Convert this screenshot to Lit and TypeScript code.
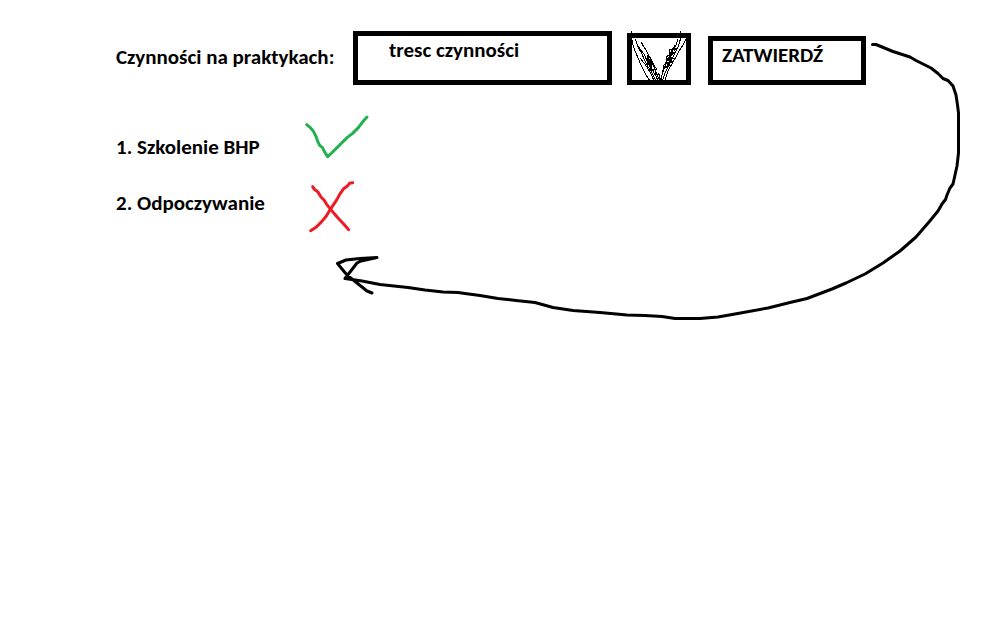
import { LitElement, html, css, svg } from "lit";
import { customElement, state } from "lit/decorators.js";

interface Activity {
  name: string;
  done: boolean;
}

@customElement("status-mark")
class StatusMark extends LitElement {
  static properties = { done: { type: Boolean } };
  declare done: boolean;

  static styles = css`
    :host {
      display: block;
      height: 56px;
    }
    .mark {
      display: block;
      width: 72px;
      height: 56px;
      overflow: visible;
      fill: none;
      stroke-width: 9;
      stroke-linecap: round;
      stroke-linejoin: round;
    }
    .yes {
      stroke: #22b14c;
    }
    .no {
      stroke: #ed1c24;
    }
  `;

  render() {
    return this.done
      ? html`<svg class="mark yes" viewBox="603 42 216 168" role="img" aria-label="wykonane">
          <path d="M620 59L630 67L639 77L648 94L653 109L659 121L667 127L674 141L683 155L695 144L742 97L758 85L775 68L790 48L801 36" />
        </svg>`
      : html`<svg class="mark no" viewBox="603 210 216 168" role="img" aria-label="niewykonane">
          <path d="M638 245L643 253L653 260L663 276L672 285L680 298L692 313L712 337L731 357L746 374" />
          <path d="M758 233L749 235L742 243L731 251L719 268L711 283L691 313L679 333L665 350L649 366L632 377" />
        </svg>`;
  }
}

@customElement("app-root")
class AppRoot extends LitElement {
  @state() private activities: Activity[] = [
    { name: "Szkolenie BHP", done: true },
    { name: "Odpoczywanie", done: false },
  ];

  static styles = css`
    :host {
      display: block;
      position: relative;
      box-sizing: border-box;
      min-height: 100vh;
      padding: 31px 24px 24px 116px;
      background: #fff;
      color: #000;
      font: bold 21px/24px Calibri, Carlito, Lato, sans-serif;
    }
    .form {
      display: flex;
      align-items: flex-end;
    }
    .caption {
      width: 237px;
      padding-bottom: 16px;
      white-space: nowrap;
    }
    .content,
    .confirm,
    .tick {
      box-sizing: border-box;
      margin: 0;
      border: 5px solid #000;
      border-radius: 0;
      background: #fff;
      color: inherit;
      font: inherit;
    }
    .content {
      flex: 0 1 259px;
      min-width: 0;
      height: 54px;
      padding: 2px 8px 18px 31px;
    }
    .toggle {
      display: grid;
      flex: none;
      margin: 0 17px 0 15px;
    }
    .tick,
    .scribble {
      grid-area: 1 / 1;
      width: 64px;
      height: 52px;
    }
    .tick {
      appearance: none;
    }
    .scribble {
      visibility: hidden;
      overflow: visible;
      pointer-events: none;
      fill: none;
      stroke: #000;
      stroke-width: 3;
      shape-rendering: crispEdges;
    }
    .tick:checked + .scribble {
      visibility: visible;
    }
    .confirm {
      flex: none;
      width: 158px;
      height: 49px;
      padding: 2px 9px 13px;
      text-align: left;
    }
    .list {
      margin: 34px 0 0;
      padding: 0;
      list-style: none;
    }
    .item {
      display: grid;
      grid-template-columns: 185px 72px;
      align-items: center;
    }
    .arrow {
      position: absolute;
      left: 330px;
      top: 36px;
      width: 640px;
      height: 290px;
      pointer-events: none;
      fill: none;
      stroke: #000;
      stroke-width: 3;
      stroke-linecap: round;
      stroke-linejoin: round;
    }
  `;

  private scribble = svg`
    <path d="M35 16V38L40 62L50 86L59 108L68 128L80 150L88 162" />
    <path d="M45 38L52 56L61 71L72 84L80 102L88 118L98 134L108 150L113 162" />
    <path d="M64 49L70 60L78 72L86 88L94 106L102 124L110 142L118 162" />
    <path d="M60 96L68 106L76 116L84 128L93 144L101 162" />
    <path d="M46 40L54 64L66 84L74 104L84 122L96 140L106 162" />
    <path d="M84 86V112L92 98V122L86 106L96 116L92 134L108 130L104 146L116 144" stroke-width="4" />
    <path d="M88 90L98 108L104 124L112 128" />
    <path d="M181 16V40L176 58L168 74L160 90L152 108L142 126L134 144L128 162" />
    <path d="M198 40L188 58L178 74L170 90L160 106L150 124L142 140L135 162" />
    <path d="M174 38L168 58L156 74L150 88L140 104L134 122L128 142L121 162" />
    <path d="M150 68L148 86L140 92L138 110L132 118L128 138" />
    <path d="M150 70H158L152 82L162 80L148 94L160 96L142 102L156 108L140 112L150 118L136 124" stroke-width="5" />
    <path d="M166 56L160 66H170L162 74" />
    <path d="M118 144V162M124 146V162" />
  `;

  render() {
    return html`
      <form class="form" @submit=${(e: Event) => e.preventDefault()}>
        <label class="caption" for="content">Czynności na praktykach:</label>
        <input class="content" id="content" type="text" value="tresc czynności" />
        <label class="toggle">
          <input class="tick" type="checkbox" aria-label="Wykonane" checked />
          <svg class="scribble" viewBox="21 21 192 156" aria-hidden="true">${this.scribble}</svg>
        </label>
        <button class="confirm" type="submit">ZATWIERDŹ</button>
      </form>
      <ol class="list">
        ${this.activities.map(
          (a, i) => html`<li class="item">
            <span>${i + 1}. ${a.name}</span>
            <status-mark .done=${a.done}></status-mark>
          </li>`
        )}
      </ol>
      <svg class="arrow" viewBox="330 36 640 290" aria-hidden="true">
        <path
          d="M872.500 44.500L876 44.500L893 51.500L910 57L916 60.500L931 68L938 73.500L943 78.500L948 80.500L953 86L956 95L957.500 105L958.500 113V153L957 166L955 175L953 184L950 188L947 195L945.500 199.500L942 204L938 211L929 222L916 237L900 251L883 263L865 274L846 283L832 289L807 298.500L790 302.500L768 308L735 314L718 317L700 318.500H675L662 316.500L645 315.500L627 315L600 312.500L573 310.500L553 307.500L535 302.500L516 300.500L498 298.500L480 295.500L465 293.500L458 292.500L443 292L425 290L408 287.500L380 284.500L362 281L345 278.500L357 263L361 261L377 257.500L360 258.500L346 260L337.500 263.500L342 269L347 275L357 283L367 291L372 293"
        />
      </svg>
    `;
  }
}
